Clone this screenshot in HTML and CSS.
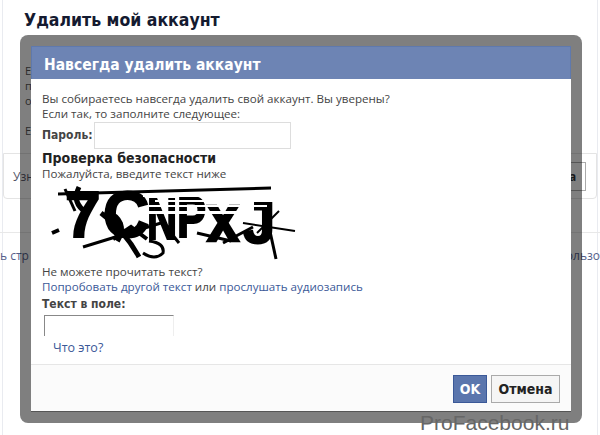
FILE: index.html
```html
<!DOCTYPE html>
<html lang="ru">
<head>
<meta charset="utf-8">
<title>Удалить мой аккаунт</title>
<link rel="stylesheet" href="styles.css">
</head>
<body>
<div class="page">
  <h1 class="page-title">Удалить мой аккаунт</h1>
  <div class="bg-text">
    <p>Е</p>
    <p>п</p>
    <p class="bg-gap">о</p>
    <p>Е</p>
  </div>
  <div class="bg-card">
    <span>Узн</span>
    <span class="bg-btn">а</span>
  </div>
  <div class="bg-links">
    <span>ь стр</span>
    <span>ользо</span>
  </div>
</div>

<div class="frame">
  <div class="dialog">
    <h2 class="dialog-head">Навсегда удалить аккаунт</h2>
    <div class="dialog-body">
      <p class="intro">Вы собираетесь навсегда удалить свой аккаунт. Вы уверены?<br>Если так, то заполните следующее:</p>
      <div class="password-row">
        <label class="strong">Пароль:</label>
        <div class="input password"></div>
      </div>
      <h3 class="section">Проверка безопасности</h3>
      <p class="hint">Пожалуйста, введите текст ниже</p>
      <svg class="captcha" width="260" height="83" viewBox="0 0 260 83" aria-label="captcha">
        <g class="cap-text">
          <text x="22" y="56" class="c1">7</text>
          <text x="60" y="56" class="c1">C</text>
          <text transform="translate(104 58) scale(.72 1)" class="c3">N</text>
          <text transform="translate(134 56) scale(.75 1)" class="c3">P</text>
          <text transform="translate(164 60) scale(1 1.15)" class="c3">x</text>
          <text transform="translate(200 62) scale(1 1)" class="c3">J</text>
        </g>
        <g class="stripes">
          <rect x="100" y="14" width="128" height="2"/>
          <rect x="112" y="19" width="110" height="2"/>
          <rect x="104" y="24" width="120" height="2"/>
          <rect x="98" y="30" width="100" height="3"/>
        </g>
        <g class="noise">
          <path d="M15 13 L228 7" stroke-width="3"/>
          <path d="M36 6 Q28 22 44 32" stroke-width="5"/>
          <path d="M22 8 L32 30" stroke-width="3"/>
          <path d="M9 52 L16 49" stroke-width="4"/>
          <path d="M40 66 L118 42" stroke-width="3"/>
          <path d="M58 32 Q82 50 96 76" stroke-width="5"/>
          <path d="M74 60 Q86 40 62 30" stroke-width="6"/>
          <path d="M70 58 L88 46 L104 58" stroke-width="4"/>
          <path d="M106 60 Q122 62 120 72 Q112 80 100 72" stroke-width="3"/>
          <path d="M120 42 L136 62" stroke-width="3"/>
          <path d="M200 42 L252 50" stroke-width="2"/>
          <path d="M223 32 L233 78" stroke-width="3"/>
          <path d="M214 52 L236 30" stroke-width="2"/>
          <path d="M180 62 L210 46" stroke-width="3"/>
          <path d="M154 52 L188 60" stroke-width="3"/>
        </g>
      </svg>
      <p class="hint">Не можете прочитать текст?</p>
      <p class="hint"><a class="link">Попробовать другой текст</a> или <a class="link">прослушать аудиозапись</a></p>
      <label class="strong field-label">Текст в поле:</label>
      <div class="input answer"></div>
      <a class="link whatis">Что это?</a>
    </div>
    <div class="dialog-foot">
      <button class="btn btn-ok">OK</button>
      <button class="btn btn-cancel">Отмена</button>
    </div>
  </div>
</div>
<div class="watermark">ProFacebook.ru</div>
</body>
</html>
```
FILE: styles.css
```css
* { box-sizing: border-box; }
html, body { margin: 0; padding: 0; }
body {
  width: 600px;
  height: 435px;
  overflow: hidden;
  background: #fff;
  font-family: "Open Sans", "DejaVu Sans", sans-serif;
  position: relative;
}
.page {
  height: 435px;
  margin: 0 2px;
  padding-top: 8px;
  border-left: 1px solid #e9ebf0;
  border-right: 1px solid #e9ebf0;
  display: flex;
  flex-direction: column;
}
.page-title {
  margin: 0 0 0 21px;
  font: bold 17.5px/24px "DejaVu Sans Condensed", "DejaVu Sans", sans-serif;
  font-stretch: condensed;
  color: #141a30;
}
.bg-text {
  margin: 31px 0 0 22px;
  font-size: 11px;
  line-height: 15px;
  color: #555;
}
.bg-text p { margin: 0; }
.bg-text .bg-gap { margin-bottom: 15px; }
.bg-card {
  margin-top: 15px;
  height: 46px;
  border: 1px solid #e4e4e4;
  border-radius: 0 0 4px 4px;
  display: flex;
  justify-content: space-between;
  align-items: center;
  padding: 0 10px 0 9px;
  font-size: 12px;
  color: #556;
}
.bg-btn {
  border: 1px solid #aaa;
  width: 18px;
  height: 29px;
  line-height: 27px;
  font-weight: bold;
  color: #333;
}
.bg-links {
  margin: 33px -3px 0;
  padding-top: 15px;
  border-top: 1px solid #e8e8e8;
  display: flex;
  justify-content: space-between;
  font-size: 12px;
  line-height: 16px;
  color: #55608a;
}
.frame {
  position: absolute;
  left: 20px;
  top: 35px;
  width: 562px;
  height: 388px;
  padding: 11px;
  border-radius: 8px;
  background: rgba(0, 0, 0, .5);
}
.dialog {
  height: 366px;
  background: #fff;
  border-bottom: 1px solid #555;
  display: flex;
  flex-direction: column;
}
.dialog-head {
  margin: 0;
  height: 33px;
  padding: 0 12px;
  background: #6d84b4;
  border: 1px solid #5f79ad;
  border-bottom: 0;
  color: #fff;
  font: bold 15.5px/36px "DejaVu Sans Condensed", "DejaVu Sans", sans-serif;
  font-stretch: condensed;
}
.dialog-body {
  flex: 1;
  padding: 12px 11px 0;
  font-size: 11.6px;
  line-height: 15px;
  color: #444;
}
.intro { margin: 0; }
.hint { margin: 0; }
.strong {
  font: bold 12px/15px "DejaVu Sans Condensed", "DejaVu Sans", sans-serif;
  font-stretch: condensed;
  color: #444;
}
.password-row {
  display: flex;
  align-items: center;
  margin-top: 1px;
}
.input { background: #fff; border: 1px solid #ddd; }
.password { width: 197px; height: 27px; margin-left: 1px; }
.section {
  margin: 1px 0 0;
  font: bold 14px/16px "DejaVu Sans Condensed", "DejaVu Sans", sans-serif;
  font-stretch: condensed;
  color: #222;
}
.captcha { display: block; margin: 0 0 0 1px; overflow: visible; }
.cap-text { font-family: "Liberation Sans", sans-serif; font-weight: bold; fill: #000; stroke: #000; stroke-width: 2; }
.c1 { font-size: 64px; }
.c3 { font-size: 58px; }
.stripes { fill: #fff; }
.noise { fill: none; stroke: #000; }
.link { color: #3b5998; }
.field-label { display: block; line-height: 17px; margin-top: 2px; }
.answer {
  width: 130px;
  height: 21px;
  margin: 2px 0 0 2px;
  border-top: 1px solid #888;
  border-left: 1px solid #888;
  border-right: 1px solid #eee;
  border-bottom: 0;
}
.whatis { display: block; margin: 4px 0 0 11px; font-size: 12.5px; }
.dialog-foot {
  height: 47px;
  background: #fbfbfb;
  border-top: 1px solid #e6e6e6;
  display: flex;
  justify-content: flex-end;
  align-items: flex-start;
  gap: 4px;
  padding: 10px 11px 0 0;
}
.btn {
  height: 28px;
  padding: 0;
  font: bold 14px/24px "DejaVu Sans Condensed", "DejaVu Sans", sans-serif;
  font-stretch: condensed;
}
.btn-ok {
  width: 34px;
  background: #5b76ad;
  border: 1px solid #3b5998;
  color: #fff;
  margin-left: 1px;
}
.btn-cancel {
  width: 69px;
  background: #f5f5f5;
  border: 1px solid #aaa;
  color: #222;
}
.watermark {
  position: absolute;
  left: 420px;
  top: 410px;
  font: 21px/25px "Liberation Sans", sans-serif;
  color: #666;
}
```
